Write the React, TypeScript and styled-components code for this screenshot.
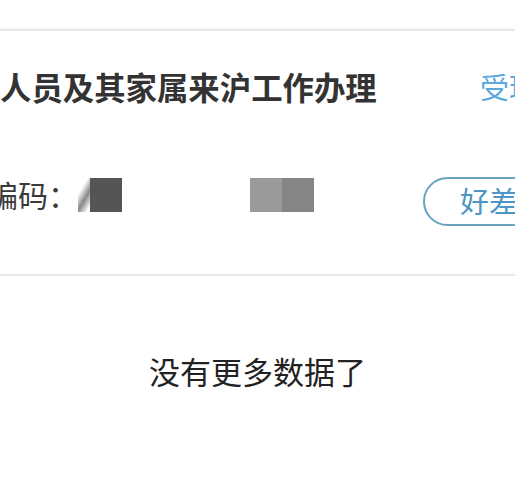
import styled, { createGlobalStyle } from 'styled-components';

const GlobalStyle = createGlobalStyle`
  html, body {
    margin: 0;
    padding: 0;
    background: #fff;
    overflow: hidden;
  }
  body {
    font-family: "Noto Sans CJK SC", "Noto Sans", sans-serif;
  }
`;

// 遮挡块：截图里被打码的编码
const masks = [
  { width: 32, color: '#555555' },
  { width: 128, color: 'transparent' },
  { width: 32, color: '#9a9a9a' },
  { width: 32, color: '#858585' },
];

const App = () => {
  return (
    <Page>
      <GlobalStyle />
      <TopBar />
      <Card>
        <TitleRow>
          <Title>人员及其家属来沪工作办理</Title>
          <Status>受理中</Status>
        </TitleRow>
        <CodeRow>
          <CodeLabel>编码：</CodeLabel>
          <Fade />
          {masks.map((m, i) => (
            <Mask key={i} color={m.color} style={{ width: m.width }} />
          ))}
          <RateButton>好差评</RateButton>
        </CodeRow>
      </Card>
      <NoMore>没有更多数据了</NoMore>
    </Page>
  );
};

export default App;

const Page = styled.div`
  width: 515px;
  height: 478px;
  overflow: hidden;
  background: #fff;
`;

const TopBar = styled.div`
  height: 29px;
  border-bottom: 2px solid #eaeaea;
  box-shadow: inset 0 -5px 0 -4px #f6f6f6;
`;

const Card = styled.div`
  width: 700px;
  padding-top: 40px;
  padding-bottom: 48px;
  border-bottom: 2px solid #e8e8e8;
`;

const TitleRow = styled.div`
  display: flex;
  align-items: center;
  height: 31px;
  white-space: nowrap;
`;

const Title = styled.div`
  flex: none;
  width: 480px;
  font-size: 31.4px;
  line-height: 31px;
  font-weight: 700;
  color: #333;
`;

const Status = styled.div`
  font-size: 29px;
  line-height: 31px;
  color: #5aa8dc;
`;

const CodeRow = styled.div`
  display: flex;
  align-items: flex-start;
  margin-top: 75px;
  white-space: nowrap;
`;

const CodeLabel = styled.span`
  margin-left: -12px;
  margin-top: 1px;
  font-size: 30px;
  line-height: 32px;
  color: #3a3a3a;
`;

const Fade = styled.span`
  width: 12px;
  height: 34px;
  margin-top: 1px;
  background: linear-gradient(120deg, #fff 30%, #888 60%, #fff 90%);
`;

const Mask = styled.span<{ color: string }>`
  height: 34px;
  margin-top: 1px;
  background: ${props => props.color};
`;

const RateButton = styled.button`
  margin-left: 109px;
  width: 180px;
  height: 49px;
  padding: 0 0 3px 35px;
  text-align: left;
  border: 2px solid #6aa2c0;
  border-radius: 25px;
  background: #fff;
  font-family: "Noto Sans CJK SC", sans-serif;
  font-size: 29px;
  line-height: 42px;
  color: #4d95c4;
`;

const NoMore = styled.div`
  margin-top: 79px;
  text-align: center;
  font-size: 31px;
  line-height: 31px;
  color: #222;
`;
